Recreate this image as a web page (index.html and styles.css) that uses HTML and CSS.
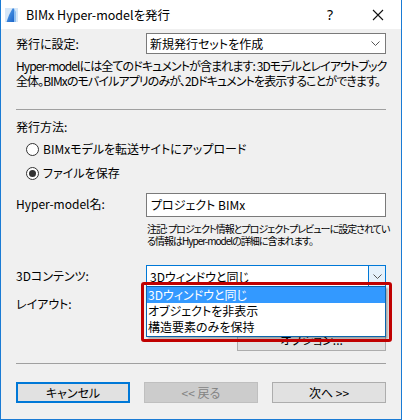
FILE: index.html
```html
<!DOCTYPE html>
<html lang="ja">

<head>
  <meta charset="UTF-8" />
  <title>BIMx Hyper-modelを発行</title>
  <link rel="stylesheet" href="styles.css">
</head>

<body>
  <div class="window">
    <div class="titlebar">
      <svg class="app-icon" width="13" height="14" viewBox="0 0 13 14">
        <defs>
          <linearGradient id="sail" x1="0" y1="0" x2="1" y2="1">
            <stop offset="0" stop-color="#5aa6ef" />
            <stop offset="1" stop-color="#1c64c8" />
          </linearGradient>
        </defs>
        <rect x="0" y="0" width="13" height="14" fill="#d6e7f8" />
        <path d="M1.5 14 Q4 6 7.5 0.5 L9 0.5 L9 14 Z" fill="url(#sail)" />
        <path d="M9 0.5 L11 4 L11 14 L9 14 Z" fill="#8fc0f0" />
      </svg>
      <span class="title">BIMx Hyper-modelを発行</span>
      <span class="help">?</span>
      <svg class="close" width="12" height="12" viewBox="0 0 12 12">
        <path d="M1 1 L11 11 M11 1 L1 11" stroke="#111" stroke-width="1.1" />
      </svg>
    </div>

    <div class="content">
      <div class="row row-set">
        <span class="label">発行に設定:</span>
        <div class="combo">
          <span class="combo-text">新規発行セットを作成</span>
          <svg class="chevron" width="9" height="5" viewBox="0 0 9 5">
            <path d="M0.5 0.5 L4.5 4.5 L8.5 0.5" fill="none" stroke="#555" stroke-width="1" />
          </svg>
        </div>
      </div>

      <p class="desc">Hyper-modelには全てのドキュメントが含まれます: 3Dモデルとレイアウトブック<br>全体。BIMxのモバイルアプリのみが、2Dドキュメントを表示することができます。</p>

      <div class="sep sep-top"></div>

      <div class="section-label">発行方法:</div>
      <label class="radio radio-first">
        <span class="radio-dot"></span>
        <span>BIMxモデルを転送サイトにアップロード</span>
      </label>
      <label class="radio radio-second">
        <span class="radio-dot checked"></span>
        <span>ファイルを保存</span>
      </label>

      <div class="row row-name">
        <span class="label label-top">Hyper-model名:</span>
        <div class="field">プロジェクト BIMx</div>
      </div>
      <div class="row">
        <span></span>
        <p class="note">注記: プロジェクト情報とプロジェクトプレビューに設定されてい<br>る情報はHyper-modelの詳細に含まれます。</p>
      </div>

      <div class="row row-3d">
        <span class="label label-3d">3Dコンテンツ:</span>
        <div class="combo combo-active">
          <span class="combo-text">3Dウィンドウと同じ</span>
          <span class="combo-btn">
            <svg width="9" height="5" viewBox="0 0 9 5">
              <path d="M0.5 0.5 L4.5 4.5 L8.5 0.5" fill="none" stroke="#555" stroke-width="1" />
            </svg>
          </span>
        </div>
      </div>

      <div class="row row-layout">
        <span class="label">レイアウト:</span>
        <div class="layout-ctrl">
          <span class="btn btn-options">オプション...</span>
        </div>
      </div>

      <div class="sep sep-bottom"></div>

      <div class="buttons">
        <span class="btn btn-default">キャンセル</span>
        <span class="btn btn-disabled">&lt;&lt; 戻る</span>
        <span class="btn">次へ &gt;&gt;</span>
      </div>
    </div>

    <ul class="dropdown">
      <li class="selected">3Dウィンドウと同じ</li>
      <li>オブジェクトを非表示</li>
      <li>構造要素のみを保持</li>
    </ul>
    <div class="highlight"></div>
  </div>
</body>

</html>
```

FILE: styles.css
```css
* {
  margin: 0;
  padding: 0;
  box-sizing: border-box;
}

body {
  background: #f0f0f0;
  font-family: "Noto Sans CJK JP", "Noto Sans", sans-serif;
  font-size: 12px;
  font-feature-settings: "palt";
  color: #000;
}

.window {
  position: relative;
  width: 402px;
  height: 420px;
  background: #f0f0f0;
  border: 1px solid #1a7bd4;
  border-top: none;
  overflow: hidden;
}

/**
 * title bar
 */
.titlebar {
  height: 29px;
  background: #fff;
  display: flex;
  align-items: center;
  padding-left: 4px;
}

.app-icon {
  margin-top: 1px;
}

.title {
  margin-left: 8px;
  font-size: 12.5px;
  flex: 1;
}

.help {
  font-family: "Noto Sans", sans-serif;
  font-size: 14px;
  margin-right: 39px;
}

.close {
  margin-right: 17px;
}

/**
 * content
 */
.content {
  padding: 4px 15px 0;
}

.row {
  display: grid;
  grid-template-columns: 130px 240px;
}

.label {
  line-height: 21px;
}

.combo {
  height: 21px;
  border: 1px solid #7a7a7a;
  background: #fff;
  display: flex;
  align-items: center;
  padding-left: 3px;
}

.combo-text {
  flex: 1;
}

.chevron {
  margin-right: 5px;
}

.desc {
  margin-top: 4px;
  line-height: 15px;
  letter-spacing: -0.9px;
  white-space: nowrap;
}

.sep {
  height: 1px;
  background: #a0a0a0;
}

.sep-top {
  margin-top: 21px;
}

.section-label {
  margin-top: 9px;
  line-height: 15px;
}

.radio {
  display: flex;
  align-items: center;
  height: 16px;
  line-height: 16px;
  padding-left: 10px;
}

.radio-first {
  margin-top: 7px;
}

.radio-second {
  margin-top: 8px;
}

.radio-dot {
  width: 13px;
  height: 13px;
  border: 1px solid #333;
  border-radius: 50%;
  background: #fff;
  margin-right: 4px;
  display: flex;
  align-items: center;
  justify-content: center;
}

.radio-dot.checked::after {
  content: "";
  width: 7px;
  height: 7px;
  border-radius: 50%;
  background: #333;
}

.row-name {
  margin-top: 12px;
}

.label-top {
  line-height: 15px;
  padding-top: 3px;
}

.field {
  height: 24px;
  line-height: 22px;
  border: 1px solid #7a7a7a;
  background: #fff;
  padding-left: 4px;
}

.note {
  margin-top: 6px;
  padding-left: 1px;
  font-size: 10px;
  line-height: 12px;
  letter-spacing: -1px;
  white-space: nowrap;
}

.row-3d {
  margin-top: 18px;
}

.label-3d {
  line-height: 22px;
}

.combo-active {
  height: 22px;
  border-color: #0078d7;
  padding-right: 0;
}

.combo-btn {
  width: 17px;
  height: 100%;
  border-left: 1px solid #0078d7;
  background: #e5f1fb;
  display: flex;
  align-items: center;
  justify-content: center;
}

.row-layout {
  margin-top: 9px;
}

.row-layout .label {
  line-height: 15px;
}

.layout-ctrl {
  display: flex;
  justify-content: flex-end;
  padding-top: 33px;
}

.btn {
  height: 21px;
  line-height: 19px;
  border: 1px solid #adadad;
  background: #e1e1e1;
  text-align: center;
}

.btn-options {
  width: 149px;
  height: 22px;
  line-height: 20px;
}

.sep-bottom {
  margin-top: 12px;
}

.buttons {
  margin-top: 18px;
  display: grid;
  grid-template-columns: repeat(3, 114px);
  gap: 14px;
}

.btn-default {
  border: 2px solid #0078d7;
  line-height: 17px;
}

.btn-disabled {
  background: #cccccc;
  border-color: #bfbfbf;
  color: #838383;
}

/**
 * open combo list
 */
.dropdown {
  position: absolute;
  left: 145px;
  top: 286px;
  width: 240px;
  height: 51px;
  list-style: none;
  background: #fff;
  border: 1px solid #0a64ad;
  box-shadow: 2px 2px 2px rgba(0, 0, 0, 0.3);
}

.dropdown li {
  height: 16px;
  line-height: 16px;
  padding-left: 1px;
}

.dropdown li.selected {
  background: #3399ff;
  color: #fff;
}

.highlight {
  position: absolute;
  left: 140px;
  top: 282px;
  width: 251px;
  height: 60px;
  border: 3px solid #c00000;
  border-radius: 3px;
}
```
